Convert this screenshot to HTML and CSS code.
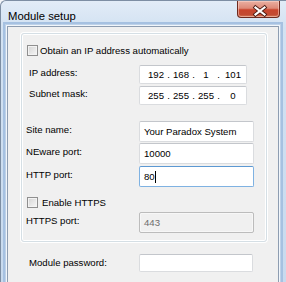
FILE: index.html
```html
<!DOCTYPE html>
<html lang="en">
<head>
  <meta charset="UTF-8">
  <title>Module setup</title>
  <link rel="stylesheet" href="styles.css">
</head>
<body>
  <div class="window">
    <div class="titlebar">
      <span class="title">Module setup</span>
      <span class="close-btn">
        <svg width="43" height="18" viewBox="0 0 43 18">
          <path d="M18.5 7.5 L27.5 14.5 M27.5 7.5 L18.5 14.5" stroke="#4a1a12" stroke-width="4" stroke-linecap="square"/>
          <path d="M18.5 7.5 L27.5 14.5 M27.5 7.5 L18.5 14.5" stroke="#fff" stroke-width="2.2" stroke-linecap="square"/>
        </svg>
      </span>
    </div>
    <div class="client">
      <div class="group">
        <div class="check-row">
          <span class="check"></span>
          <span class="check-text">Obtain an IP address automatically</span>
        </div>
        <div class="row ip-row">
          <span class="label indent">IP address:</span>
          <div class="field ip-field">
            <span class="octet">192</span><span class="dot">.</span>
            <span class="octet">168</span><span class="dot">.</span>
            <span class="octet">1</span><span class="dot">.</span>
            <span class="octet">101</span>
          </div>
        </div>
        <div class="row ip-row mask-row">
          <span class="label indent">Subnet mask:</span>
          <div class="field ip-field">
            <span class="octet">255</span><span class="dot">.</span>
            <span class="octet">255</span><span class="dot">.</span>
            <span class="octet">255</span><span class="dot">.</span>
            <span class="octet">0</span>
          </div>
        </div>
        <div class="row site-row">
          <span class="label">Site name:</span>
          <div class="field">Your Paradox System</div>
        </div>
        <div class="row neware-row">
          <span class="label">NEware port:</span>
          <div class="field">10000</div>
        </div>
        <div class="row http-row">
          <span class="label">HTTP port:</span>
          <div class="field focused"><span class="caret">80</span></div>
        </div>
        <div class="check-row https-check">
          <span class="check"></span>
          <span class="check-text">Enable HTTPS</span>
        </div>
        <div class="row https-row">
          <span class="label">HTTPS port:</span>
          <div class="field disabled">443</div>
        </div>
      </div>
      <div class="row pw-row">
        <span class="label">Module password:</span>
        <div class="field pw-field"></div>
      </div>
    </div>
  </div>
</body>
</html>
```

FILE: styles.css
```css
body {
  margin: 0;
  background: #f4f6f9;
  font-family: "Liberation Sans", Arial, sans-serif;
  font-size: 9.6px;
  color: #000;
}
.window {
  width: 286px;
  height: 282px;
  box-sizing: border-box;
  overflow: hidden;
  border-top: 1px solid #7d8ea3;
  border-left: 1px solid #7d8ea3;
  border-top-left-radius: 6px;
  background: linear-gradient(180deg, #e2ecf7 0, #d3e2f2 26px, #c8daee 100%);
  padding: 0 7px 0 6px;
  display: flex;
  flex-direction: column;
}
.titlebar {
  height: 25px;
  display: flex;
  justify-content: space-between;
  align-items: flex-start;
}
.title {
  font-size: 11.3px;
  padding: 9px 0 0 1px;
  line-height: 13px;
}
.close-btn {
  width: 43px;
  height: 18px;
  margin-top: -1px;
  margin-right: -1px;
  box-sizing: border-box;
  border: 1px solid #6e2a1f;
  border-top-color: #8a4a40;
  border-radius: 0 0 4px 4px;
  background: linear-gradient(180deg, #eab0a2 0, #de8a78 45%, #c9452d 55%, #c24b33 85%, #d47a58 100%);
  box-shadow: inset 0 0 0 1px rgba(255, 220, 210, 0.5);
  display: block;
  position: relative;
}
.close-btn svg {
  position: absolute;
  left: -1px;
  top: -1px;
}
.client {
  flex: 1;
  background: #f0f0f0;
  border: 1px solid #8e9db1;
  border-bottom: none;
  box-shadow: 0 0 0 1px #f1f6fb, 0 0 0 2px #bed2e9, 0 0 0 4px #a6c1e1;
  padding: 6px 0 0 13px;
}
.group {
  width: 246px;
  box-sizing: border-box;
  border: 1px solid #d5dfe5;
  border-radius: 3px;
  box-shadow: inset 0 0 0 1px #fff, 0 0 0 1px #fff;
  padding: 11px 0 8px 4px;
}
.check-row {
  display: flex;
  align-items: center;
  height: 11px;
  padding-left: 1px;
}
.check {
  width: 11px;
  height: 11px;
  box-sizing: border-box;
  border: 1px solid #8f8f8f;
  background: linear-gradient(135deg, #d3d3d3 0, #e9e9e9 60%, #f6f6f6 100%);
  box-shadow: inset 0 0 0 1px #f3f3f3;
}
.check-text {
  margin-left: 2px;
  line-height: 11px;
}
.https-check {
  margin-top: 10px;
}
.https-check .check-text {
  margin-left: 4px;
}
.row {
  display: flex;
  align-items: center;
}
.label {
  width: 113px;
  flex: none;
  margin-bottom: 4px;
}
.indent {
  padding-left: 3px;
  box-sizing: border-box;
}
.field {
  width: 115px;
  height: 21px;
  box-sizing: border-box;
  background: #fff;
  border: 1px solid #dadcdf;
  border-top-color: #c3c6cb;
  border-radius: 2px;
  padding-left: 4px;
  display: flex;
  align-items: center;
}
.ip-row {
  margin-top: 9px;
}
.mask-row {
  margin-top: 2px;
}
.ip-field {
  width: 108px;
  height: 19px;
  padding-left: 6px;
}
.octet {
  width: 20px;
  text-align: center;
}
.octet:last-child {
  width: 24px;
}
.dot {
  width: 5px;
  text-align: center;
}
.site-row {
  margin-top: 16px;
}
.neware-row {
  margin-top: 1px;
}
.http-row {
  margin-top: 2px;
}
.focused {
  border-color: #7fb2e2;
  border-top-color: #5c98d2;
}
.caret {
  border-right: 1px solid #000;
  line-height: 12px;
}
.https-row {
  margin-top: 4px;
}
.disabled {
  background: #f0f0f0;
  border-color: #bcbcbc;
  box-shadow: inset 0 0 0 1px #f7f7f7;
  color: #6d6d6d;
}
.pw-row {
  margin-top: 12px;
  padding-left: 8px;
}
.pw-row .label {
  width: 110px;
  margin-bottom: 2px;
}
.pw-field {
  width: 114px;
  height: 18px;
}
```
